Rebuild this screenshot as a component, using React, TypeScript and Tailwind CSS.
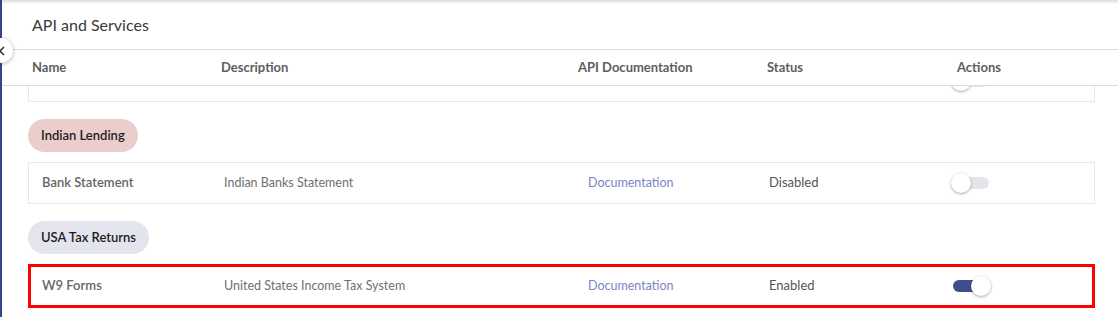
import React from "react";

function Toggle({ on }: { on: boolean }) {
  return (
    <div className="relative w-[40px] h-[20px] flex items-center">
      <div
        className={
          on
            ? "ml-[2px] w-[32px] h-[12px] rounded-full bg-[#3f4f8b]"
            : "ml-[2px] w-[36px] h-[12px] rounded-full bg-[#e4e5ea]"
        }
      />
      <div
        className={
          on
            ? "absolute left-[20px] top-0 w-[20px] h-[20px] rounded-full bg-white shadow-[0_1px_3px_rgba(0,0,0,0.35)]"
            : "absolute left-0 top-0 w-[20px] h-[20px] rounded-full bg-white shadow-[0_1px_3px_rgba(0,0,0,0.35)]"
        }
      />
    </div>
  );
}

function Row({
  name,
  desc,
  status,
  on,
  highlight,
  empty,
}: {
  name: string;
  desc: string;
  status: string;
  on: boolean;
  highlight?: boolean;
  empty?: boolean;
}) {
  return (
    <div
      className={
        highlight
          ? "flex items-center h-[44px] border-[3px] border-[#ff0000] pl-[11px] text-[13px] w-[1067px]"
          : "flex items-center h-[42px] border border-[#e8e8e8] pl-[13px] text-[13px] w-[1067px]"
      }
    >
      <div className="w-[182px] font-semibold text-[#666]">{name}</div>
      <div className="w-[364px] text-[12.5px] text-[#707070]">{desc}</div>
      <div className="w-[181px] text-[12.5px] text-[#7b84c6]">{empty ? "" : "Documentation"}</div>
      <div className="w-[182px] text-[#555]">{status}</div>
      <Toggle on={on} />
    </div>
  );
}

export default function App() {
  return (
    <div
      className="relative w-[1118px] h-[317px] bg-white overflow-hidden"
      style={{ fontFamily: "Lato, 'Open Sans', sans-serif" }}
    >
      <div className="absolute left-0 top-0 h-full w-[2px] bg-[#34458a]" />
      <div className="h-[4px] bg-gradient-to-b from-[#dcdcdc] to-white" />
      <div className="h-[45px] flex items-center pb-[4px] pl-[32px] text-[16px] text-[#3a3a3a]">
        API and Services
      </div>
      <div className="border-t border-b border-[#dcdcdc] h-[37px] flex items-center pl-[32px] text-[13px] font-bold text-[#5e5e5e]">
        <div className="w-[189px]">Name</div>
        <div className="w-[357px]">Description</div>
        <div className="w-[189px]">API Documentation</div>
        <div className="w-[190px]">Status</div>
        <div>Actions</div>
      </div>
      <div className="pl-[28px]">
        <div className="h-[16px] overflow-hidden flex flex-col justify-end">
          <div className="shrink-0">
            <Row name="" desc="" status="" on={false} empty />
          </div>
        </div>
        <div className="mt-[17px] inline-flex items-center h-[33px] px-[13px] rounded-full bg-[#ebcdcc] text-[13px] font-semibold text-[#1e1e1e]">
          Indian Lending
        </div>
        <div className="mt-[10px]">
          <Row name="Bank Statement" desc="Indian Banks Statement" status="Disabled" on={false} />
        </div>
        <div className="mt-[17px] inline-flex items-center h-[33px] px-[13px] rounded-full bg-[#e3e4ee] text-[13px] font-semibold text-[#1e1e1e]">
          USA Tax Returns
        </div>
        <div className="mt-[10px]">
          <Row
            name="W9 Forms"
            desc="United States Income Tax System"
            status="Enabled"
            on={true}
            highlight
          />
        </div>
      </div>
      <div className="absolute left-[-12px] top-[38px] w-[25px] h-[25px] rounded-full bg-white shadow-[0_1px_4px_rgba(0,0,0,0.3)] flex items-center justify-end pr-[7px]">
        <svg width="8" height="10" viewBox="0 0 8 10" fill="none">
          <path d="M6 1 L2 5 L6 9" stroke="#333" strokeWidth="1.6" />
        </svg>
      </div>
    </div>
  );
}
